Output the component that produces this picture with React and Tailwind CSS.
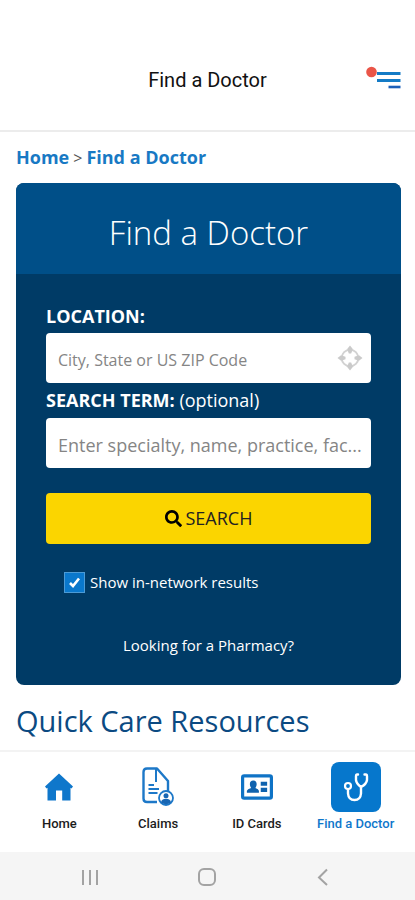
import { FaSearch } from "react-icons/fa";

function MenuIcon() {
  return (
    <svg width="36" height="26" viewBox="0 0 36 26" aria-hidden="true">
      <path d="M11 8.500H34.500M11 15.500H34.500" stroke="#147bc6" strokeWidth="3" />
      <path d="M22.500 22H34.500" stroke="#1c5fb8" strokeWidth="2.600" />
      <circle cx="5.500" cy="7" r="5.300" fill="#ea5548" />
    </svg>
  );
}

function TargetIcon() {
  return (
    <svg width="26" height="26" viewBox="0 0 26 26" aria-hidden="true">
      <circle cx="13" cy="13" r="8.300" fill="none" stroke="#d2d2d2" strokeWidth="1.900" />
      <path
        d="M13 0.500L15.800 4L14.200 8.500H11.800L10.200 4ZM13 25.500L15.800 22L14.200 17.500H11.800L10.200 22ZM0.500 13L4 10.200L8.500 11.800V14.200L4 15.800ZM25.500 13L22 10.200L17.500 11.800V14.200L22 15.800Z"
        fill="#cacaca"
      />
    </svg>
  );
}

function HomeIcon() {
  return (
    <svg width="28" height="28" viewBox="0 0 28 28" aria-hidden="true">
      <path d="M14 0.500L28 13.500L26.500 15.500L25.500 14.800V27.500H17.200V17.500H11V27.500H2.500V14.800L1.500 15.500L0 13.500Z" fill="#0f77cb" />
    </svg>
  );
}

function ClaimsIcon() {
  return (
    <svg width="32" height="40" viewBox="0 0 32 40" fill="none" aria-hidden="true">
      <path
        d="M15 35H5Q1.500 35 1.500 31.500V5Q1.500 1.500 5 1.500H15L26 14V25"
        stroke="#1d78c8"
        strokeWidth="2.400"
        strokeLinejoin="round"
      />
      <path d="M14 2V15" stroke="#1d78c8" strokeWidth="2" />
      <path d="M6.500 18H12M6.500 22H17M6.500 26H15.500" stroke="#1d78c8" strokeWidth="1.800" />
      <circle cx="24" cy="31" r="7" fill="#fff" stroke="#1d78c8" strokeWidth="1.800" />
      <circle cx="24" cy="28.800" r="2.500" fill="#1766b4" />
      <path d="M19 35.500Q19.500 31.800 24 31.800Q28.500 31.800 29 35.500Q24 39 19 35.500Z" fill="#1766b4" />
    </svg>
  );
}

function CardIcon() {
  return (
    <svg width="32" height="26" viewBox="0 0 30 24" aria-hidden="true">
      <rect x="1.500" y="1.500" width="27" height="21" rx="1.500" fill="#fff" stroke="#0f73c6" strokeWidth="3" />
      <path
        d="M5.500 17.500V15.500Q6 14 9.500 13Q8.300 11.500 8.300 9.500Q8.300 6 11.500 6Q14.700 6 14.700 9.500Q14.700 11.500 13.500 13Q16.500 14 16.800 15.500V17.500Z"
        fill="#0f62ae"
      />
      <path d="M18.500 7H24.500V10.800H18.500ZM18.500 12.800H24.500V16.600H18.500Z" fill="#0f62ae" />
    </svg>
  );
}

function StethoscopeIcon() {
  return (
    <svg width="26" height="30" viewBox="0 0 26 30" fill="none" stroke="#fff" strokeLinecap="round" aria-hidden="true">
      <path d="M15 2.500H13.800Q13 2.500 13 4V8Q13.500 12 18 15Q23.500 12 24 8V4Q24 2.500 23.200 2.500H21.500" strokeWidth="2.400" />
      <circle cx="5" cy="14" r="3" strokeWidth="2.200" />
      <path d="M5 17.500V21.500Q5.500 28 11.500 28Q17.500 28 18 21.500V15" strokeWidth="2.400" />
    </svg>
  );
}

const tabs = [
  { label: "Home", Icon: HomeIcon },
  { label: "Claims", Icon: ClaimsIcon },
  { label: "ID Cards", Icon: CardIcon },
  { label: "Find a Doctor", Icon: StethoscopeIcon, active: true },
];

function Tab({ label, Icon, active }) {
  return (
    <a
      href="#"
      aria-current={active ? "page" : undefined}
      className={`flex flex-1 flex-col items-center gap-1 font-['Roboto',sans-serif] text-[13px] leading-4 font-medium whitespace-nowrap ${
        active ? "text-[#0f77cb]" : "text-[#1c1c1c]"
      }`}
    >
      <span className={`flex size-[50px] items-center justify-center rounded-lg ${active ? "bg-[#0677cc]" : ""}`}>
        <Icon />
      </span>
      {label}
    </a>
  );
}

export default function App() {
  return (
    <div className="flex min-h-screen flex-col bg-white font-['Open_Sans',sans-serif]">
      <header className="grid h-[132px] grid-cols-[1fr_auto_1fr] items-center border-b-2 border-[#ececec] px-[13px] pt-[30px]">
        <h1 className="col-start-2 font-['Roboto',sans-serif] text-[20px] leading-6 text-[#111]">Find a Doctor</h1>
        <button type="button" aria-label="Menu" className="mb-1 justify-self-end">
          <MenuIcon />
        </button>
      </header>

      <main className="flex-1 pr-[14px] pl-4">
        <nav aria-label="Breadcrumb" className="flex h-[51px] items-center gap-1 text-[18px] text-[#555]">
          <a href="#" className="font-bold text-[#1879c4]">Home</a>
          <span className="text-[16px]">&gt;</span>
          <a href="#" className="font-bold text-[#1879c4]">Find a Doctor</a>
        </nav>

        <section className="overflow-hidden rounded-lg bg-[#003b66] text-white">
          <h2 className="bg-[#004f88] pt-[30px] pb-[21px] text-center text-[33px] leading-10 font-light">Find a Doctor</h2>
          <form className="flex flex-col px-[30px] pt-[30px] pb-7" onSubmit={(e) => e.preventDefault()}>
            <label htmlFor="location" className="pb-[5px] text-[18px] leading-6 font-bold">LOCATION:</label>
            <div className="flex h-[50px] items-center rounded-[4px] bg-white pr-2 pl-3">
              <input
                id="location"
                type="text"
                placeholder="City, State or US ZIP Code"
                className="h-full min-w-0 flex-1 pt-1 text-[16px] text-[#333] outline-none placeholder:text-[#858585]"
              />
              <button type="button" aria-label="Use my location">
                <TargetIcon />
              </button>
            </div>
            <label htmlFor="term" className="pt-[5px] pb-[6px] text-[18px] leading-6">
              <span className="font-bold">SEARCH TERM:</span> (optional)
            </label>
            <input
              id="term"
              type="text"
              placeholder="Enter specialty, name, practice, fac..."
              className="h-[50px] w-full rounded-[4px] bg-white pt-1 pr-2 pl-3 text-[18px] text-[#333] outline-none placeholder:text-[#858585]"
            />
            <button
              type="submit"
              className="mt-[25px] flex h-[51px] items-center justify-center gap-1 rounded-[4px] bg-[#fbd500] text-[18px] text-[#222]"
            >
              <FaSearch className="size-[17px] text-black" />
              SEARCH
            </button>
            <label className="mt-6 flex items-center gap-[5px] pl-[18px] text-[15px] leading-7">
              <span className="grid size-[21px]">
                <input
                  type="checkbox"
                  defaultChecked
                  className="peer col-start-1 row-start-1 size-full appearance-none border border-[#4c9bd6] bg-[#0a78cc]"
                />
                <svg
                  viewBox="0 0 21 21"
                  className="pointer-events-none invisible col-start-1 row-start-1 peer-checked:visible"
                  fill="none"
                  stroke="#fff"
                  strokeWidth="2.600"
                  aria-hidden="true"
                >
                  <path d="M6 11L9 14L15 6.500" />
                </svg>
              </span>
              Show in-network results
            </label>
            <a href="#" className="mt-[37px] self-center text-[15px] leading-6">Looking for a Pharmacy?</a>
          </form>
        </section>

        <h2 className="pt-4 pb-[9px] text-[29px] leading-10 text-[#0b4a82]">Quick Care Resources</h2>
      </main>

      <nav aria-label="Main" className="flex h-[102px] border-t-2 border-[#f3f3f3] px-[10px] pt-[10px]">
        {tabs.map((t) => (
          <Tab key={t.label} {...t} />
        ))}
      </nav>

      <footer className="flex h-12 items-center justify-between bg-[#f5f5f5] px-[80px] pt-[2px] text-[#a3a3a3]">
        <button type="button" aria-label="Recent apps">
          <svg width="20" height="20" viewBox="0 0 20 20" stroke="currentColor" strokeWidth="2">
            <path d="M3 3V18M10 3V18M17 3V18" />
          </svg>
        </button>
        <button type="button" aria-label="Home screen">
          <svg width="20" height="20" viewBox="0 0 20 20" fill="none" stroke="currentColor" strokeWidth="2">
            <rect x="1" y="2" width="16" height="16" rx="5" />
          </svg>
        </button>
        <button type="button" aria-label="Back">
          <svg width="20" height="20" viewBox="0 0 20 20" fill="none" stroke="currentColor" strokeWidth="2">
            <path d="M12 2.500L4 10.500L12 18" />
          </svg>
        </button>
      </footer>
    </div>
  );
}
